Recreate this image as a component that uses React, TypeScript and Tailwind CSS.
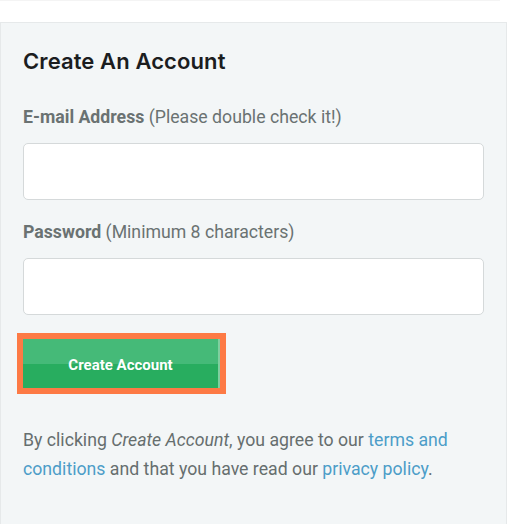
import React from "react";

export default function App() {
  return (
    <div className="w-[508px] h-[524px] bg-white overflow-hidden" style={{ fontFamily: "Roboto, 'Liberation Sans', sans-serif" }}>
      <div className="h-[22px] bg-white border-t border-[#f4f4f4] w-[500px]" />
      <div className="w-[507px] h-[502px] bg-[#f3f6f7] border border-[#e6e9ea] border-b-0 px-[22px] pt-[22px]">
        <h1 className="text-[22px] leading-[32px] font-semibold text-[#1b1d1f] tracking-[0.1px]" style={{ fontFamily: "Inter, Roboto, sans-serif" }}>
          Create An Account
        </h1>
        <div className="mt-[27px] text-[17.7px] leading-[26px] text-[#6a7272]">
          <span className="font-bold">E-mail Address</span> (Please double check it!)
        </div>
        <div className="mt-[13px] h-[57px] w-[461px] bg-white border border-[#d5d9da] rounded-[5px]" />
        <div className="mt-[19px] text-[17.7px] leading-[26px] text-[#6a7272]">
          <span className="font-bold">Password</span> (Minimum 8 characters)
        </div>
        <div className="mt-[13px] h-[57px] w-[461px] bg-white border border-[#d5d9da] rounded-[5px]" />
        <div className="mt-[18px] -ml-[6px] w-[209px] h-[61px] bg-[#fd7a45] p-[6px]">
          <button className="w-[197px] h-[49px] flex items-center justify-center pt-[4px] text-white text-[15px] font-bold bg-[linear-gradient(to_bottom,#45ba78_0%,#45ba78_50%,#28ad5f_52%,#28ad5f_100%)] border-r-[2px] border-[#7fcf9f]">
            Create Account
          </button>
        </div>
        <p className="mt-[32px] text-[17.7px] leading-[29px] text-[#666e6e]">
          By clicking <em>Create Account</em>, you agree to our{" "}
          <a className="text-[#4c9dc8]">terms and conditions</a> and that you have read our{" "}
          <a className="text-[#4c9dc8]">privacy policy</a>.
        </p>
      </div>
    </div>
  );
}
